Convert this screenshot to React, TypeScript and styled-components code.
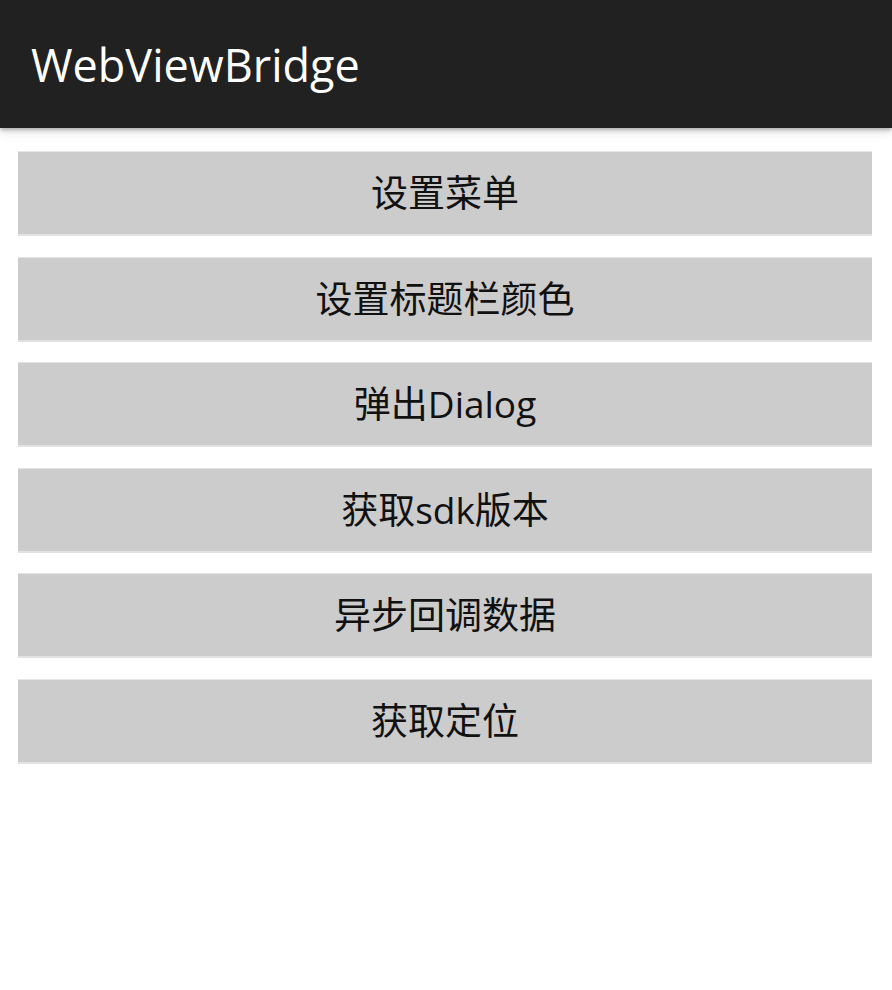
import React from "react";
import styled, { createGlobalStyle } from "styled-components";

const Global = createGlobalStyle`
  html, body { margin: 0; padding: 0; background: #ffffff; }
  body { font-family: "Open Sans", "Noto Sans CJK SC", sans-serif; }
`;

const Page = styled.div`
  width: 892px;
  min-height: 990px;
  background: #ffffff;
`;

const Toolbar = styled.header`
  height: 128px;
  background: #212121;
  display: flex;
  align-items: center;
  padding: 0 0 0 31px;
  box-sizing: border-box;
  box-shadow: 0 2px 4px rgba(0, 0, 0, 0.28), 0 6px 10px rgba(0, 0, 0, 0.08);
  position: relative;
  z-index: 1;
`;

const Title = styled.h1`
  margin: 0;
  margin-top: 1px;
  font-family: "Open Sans", "Noto Sans", sans-serif;
  font-weight: 400;
  font-size: 45px;
  color: #ffffff;
  letter-spacing: 0;
`;

const List = styled.main`
  display: flex;
  flex-direction: column;
  gap: 23.5px;
  padding: 24px 20px 0 18px;
`;

const ActionButton = styled.button`
  height: 82px;
  width: 100%;
  border: none;
  margin: 0;
  padding: 0 0 4px;
  background: #cccccc;
  box-shadow: 0 -1px 0 #e4e4e4, 0 2px 0 #e2e2e2;
  display: flex;
  align-items: center;
  justify-content: center;
  font-family: "Open Sans", "Noto Sans CJK SC", sans-serif;
  font-size: 37px;
  color: #111111;
  cursor: pointer;
`;

const actions = [
  "设置菜单",
  "设置标题栏颜色",
  "弹出Dialog",
  "获取sdk版本",
  "异步回调数据",
  "获取定位",
];

export default function App() {
  return (
    <Page>
      <Global />
      <Toolbar>
        <Title>WebViewBridge</Title>
      </Toolbar>
      <List>
        {actions.map((a) => (
          <ActionButton key={a}>{a}</ActionButton>
        ))}
      </List>
    </Page>
  );
}
